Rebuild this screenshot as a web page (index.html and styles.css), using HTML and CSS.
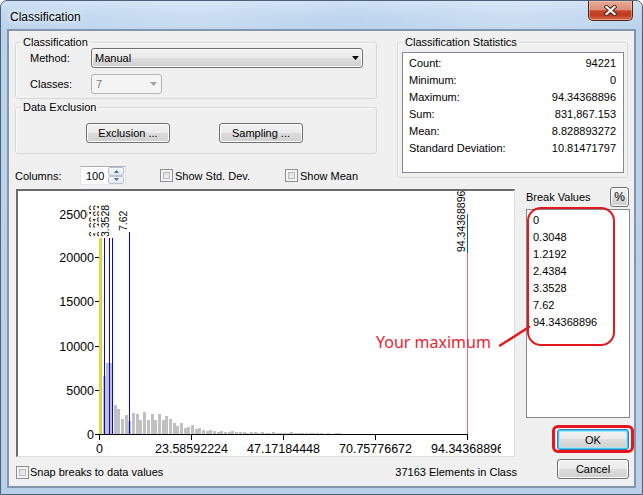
FILE: index.html
```html
<!DOCTYPE html>
<html>
<head>
<meta charset="utf-8">
<title>Classification</title>
<link rel="stylesheet" href="styles.css">
</head>
<body>
<div class="window">
  <div class="titlebar">
    <span class="title">Classification</span>
    <div class="close">
      <svg width="13" height="11" viewBox="0 0 13 11"><path d="M2.5 2 L10.5 9 M10.5 2 L2.5 9" stroke="#4a2419" stroke-width="4.2" stroke-linecap="square"/><path d="M2.5 2 L10.5 9 M10.5 2 L2.5 9" stroke="#fff" stroke-width="2.2" stroke-linecap="square"/></svg>
    </div>
  </div>
  <div class="client">
    <div class="top">
      <div class="left-col">
        <fieldset class="group g-class">
          <legend>Classification</legend>
          <div class="form">
            <div class="form-row">
              <span class="lbl">Method:</span>
              <div class="combo combo-method"><span>Manual</span><svg class="arr" width="7" height="4" viewBox="0 0 7 4"><path d="M0 0H7L3.5 4Z" fill="#000"/></svg></div>
            </div>
            <div class="form-row">
              <span class="lbl">Classes:</span>
              <div class="combo combo-classes"><span>7</span><svg class="arr" width="7" height="4" viewBox="0 0 7 4"><path d="M0 0H7L3.5 4Z" fill="#a3a3a3"/></svg></div>
            </div>
          </div>
        </fieldset>
        <fieldset class="group g-excl">
          <legend>Data Exclusion</legend>
          <div class="btn-row">
            <div class="btn btn-wide">Exclusion ...</div>
            <div class="btn btn-wide">Sampling ...</div>
          </div>
        </fieldset>
        <div class="controls">
          <span class="col-lbl">Columns:</span>
          <div class="spin">
            <span class="spin-val">100</span>
            <div class="spin-btns">
              <div class="spin-btn"><svg width="5" height="3" viewBox="0 0 5 3"><path d="M0 3H5L2.5 0Z" fill="#4a6a96"/></svg></div>
              <div class="spin-btn"><svg width="5" height="3" viewBox="0 0 5 3"><path d="M0 0H5L2.5 3Z" fill="#4a6a96"/></svg></div>
            </div>
          </div>
          <span class="cb cb-std"></span><span class="cb-lbl lbl-std">Show Std. Dev.</span>
          <span class="cb"></span><span class="cb-lbl">Show Mean</span>
        </div>
      </div>
      <fieldset class="group g-stats">
        <legend>Classification Statistics</legend>
        <div class="stats">
          <div class="stat"><span>Count:</span><span>94221</span></div>
          <div class="stat"><span>Minimum:</span><span>0</span></div>
          <div class="stat"><span>Maximum:</span><span>94.34368896</span></div>
          <div class="stat"><span>Sum:</span><span>831,867.153</span></div>
          <div class="stat"><span>Mean:</span><span>8.828893272</span></div>
          <div class="stat"><span>Standard Deviation:</span><span>10.81471797</span></div>
        </div>
      </fieldset>
    </div>

    <div class="main">
      <div class="chart-col">
        <div class="chart">
          <svg class="plot" width="496" height="265" viewBox="18 191 496 265" shape-rendering="crispEdges">
            <defs><clipPath id="clipx"><rect x="18" y="191" width="483" height="265"/></clipPath></defs>
            <g fill="#c0c0c0">
              <rect x="99" y="238" width="3" height="196"/>
              <rect x="103" y="376" width="3" height="58"/>
              <rect x="106" y="363" width="4" height="71"/>
              <rect x="110" y="363" width="3" height="71"/>
              <rect x="114" y="405" width="3" height="29"/>
              <rect x="117" y="409" width="3" height="25"/>
              <rect x="121" y="419" width="3" height="15"/>
              <rect x="125" y="415" width="3" height="19"/>
              <rect x="128" y="421" width="3" height="13"/>
              <rect x="132" y="413" width="3" height="21"/>
              <rect x="136" y="414" width="3" height="20"/>
              <rect x="139" y="420" width="3" height="14"/>
              <rect x="143" y="412" width="3" height="22"/>
              <rect x="147" y="420" width="3" height="14"/>
              <rect x="151" y="414" width="3" height="20"/>
              <rect x="154" y="420" width="3" height="14"/>
              <rect x="158" y="414" width="3" height="20"/>
              <rect x="162" y="420" width="3" height="14"/>
              <rect x="165" y="416" width="3" height="18"/>
              <rect x="169" y="419" width="3" height="15"/>
              <rect x="173" y="423" width="3" height="11"/>
              <rect x="176" y="426" width="3" height="8"/>
              <rect x="180" y="423" width="3" height="11"/>
              <rect x="184" y="428" width="3" height="6"/>
              <rect x="187" y="427" width="3" height="7"/>
              <rect x="191" y="425" width="3" height="9"/>
              <rect x="195" y="429" width="3" height="5"/>
              <rect x="198" y="428" width="3" height="6"/>
              <rect x="202" y="430" width="3" height="4"/>
              <rect x="206" y="431" width="3" height="3"/>
              <rect x="209" y="430" width="3" height="4"/>
              <rect x="213" y="431" width="3" height="3"/>
              <rect x="217" y="432" width="3" height="2"/>
              <rect x="220" y="431" width="3" height="3"/>
              <rect x="224" y="432" width="3" height="2"/>
              <rect x="228" y="432" width="3" height="2"/>
              <rect x="231" y="431" width="3" height="3"/>
              <rect x="235" y="432" width="3" height="2"/>
              <rect x="239" y="432" width="3" height="2"/>
              <rect x="243" y="432" width="3" height="2"/>
              <rect x="246" y="433" width="3" height="1"/>
              <rect x="250" y="432" width="3" height="2"/>
              <rect x="254" y="432" width="3" height="2"/>
              <rect x="257" y="433" width="3" height="1"/>
              <rect x="261" y="432" width="3" height="2"/>
              <rect x="265" y="433" width="3" height="1"/>
              <rect x="268" y="433" width="3" height="1"/>
              <rect x="272" y="432" width="3" height="2"/>
              <rect x="276" y="433" width="3" height="1"/>
              <rect x="279" y="433" width="3" height="1"/>
              <rect x="283" y="433" width="3" height="1"/>
              <rect x="287" y="433" width="3" height="1"/>
              <rect x="290" y="432" width="3" height="2"/>
              <rect x="294" y="433" width="3" height="1"/>
              <rect x="298" y="433" width="3" height="1"/>
              <rect x="301" y="433" width="3" height="1"/>
              <rect x="305" y="433" width="3" height="1"/>
              <rect x="309" y="433" width="3" height="1"/>
              <rect x="312" y="433" width="3" height="1"/>
              <rect x="316" y="433" width="3" height="1"/>
              <rect x="320" y="433" width="3" height="1"/>
              <rect x="327" y="433" width="3" height="1"/>
              <rect x="335" y="433" width="3" height="1"/>
              <rect x="338" y="433" width="3" height="1"/>
            </g>
            <g fill="#000">
              <rect x="95" y="213" width="4" height="1"/>
              <rect x="95" y="257" width="4" height="1"/>
              <rect x="95" y="301" width="4" height="1"/>
              <rect x="95" y="346" width="4" height="1"/>
              <rect x="95" y="390" width="4" height="1"/>
              <rect x="95" y="434" width="4" height="1"/>
              <rect x="99" y="434" width="369" height="1"/>
              <rect x="99" y="434" width="1" height="6"/>
              <rect x="191" y="434" width="1" height="6"/>
              <rect x="283" y="434" width="1" height="6"/>
              <rect x="375" y="434" width="1" height="6"/>
              <rect x="467" y="434" width="1" height="6"/>
            </g>
            <g class="axis-txt" text-anchor="end">
              <text x="94" y="218.5">25000</text>
              <text x="94" y="262">20000</text>
              <text x="94" y="306">15000</text>
              <text x="94" y="351">10000</text>
              <text x="94" y="395">5000</text>
              <text x="94" y="439">0</text>
            </g>
            <g class="axis-txt" text-anchor="middle">
              <text x="99.5" y="453">0</text>
              <text x="191.5" y="453">23.58592224</text>
              <text x="283.5" y="453">47.17184448</text>
              <text x="375.5" y="453">70.75776672</text>
              <text x="467.5" y="453" clip-path="url(#clipx)">94.34368896</text>
            </g>
            <rect x="99" y="238" width="2" height="196" fill="#ece000"/>
            <g fill="#0000ff">
              <rect x="104" y="238" width="1" height="196"/>
              <rect x="109" y="238" width="1" height="196"/>
              <rect x="112" y="238" width="1" height="196"/>
              <rect x="129" y="232" width="1" height="202"/>
            </g>
            <rect x="467" y="214" width="1" height="39" fill="#006a6a"/>
            <rect x="467" y="253" width="1" height="181" fill="#f06868"/>
            <g class="brk-txt" shape-rendering="auto">
              <g transform="translate(95.5 237) rotate(-90)"><rect x="0" y="-9.5" width="6" height="11.7" fill="#fff"/><text>0</text></g>
              <g transform="translate(97 237) rotate(-90)"><rect x="0" y="-9.5" width="32" height="11.7" fill="#fff"/><text>0.3048</text></g>
              <g transform="translate(100.5 237) rotate(-90)"><rect x="0" y="-9.5" width="32" height="11.7" fill="#fff"/><text>1.2192</text></g>
              <g transform="translate(105 237) rotate(-90)"><rect x="0" y="-9.5" width="32" height="11.7" fill="#fff"/><text>2.4384</text></g>
              <g transform="translate(108.5 237) rotate(-90)"><rect x="0" y="-9.5" width="32" height="11.7" fill="#fff"/><text>3.3528</text></g>
              <g transform="translate(127 231) rotate(-90)"><rect x="0" y="-9.5" width="20.5" height="11.7" fill="#fff"/><text>7.62</text></g>
              <g transform="translate(464.5 252) rotate(-90)"><rect x="0" y="-9.5" width="61.5" height="11.7" fill="#fff"/><text>94.34368896</text></g>
            </g>
          </svg>
        </div>
        <div class="status">
          <div class="status-left"><span class="cb"></span><span class="cb-lbl snap-lbl">Snap breaks to data values</span></div>
          <span class="count">37163 Elements in Class</span>
        </div>
      </div>
      <div class="side">
        <div class="side-head"><span>Break Values</span><div class="btn btn-pct">%</div></div>
        <div class="breaks">
          <div class="brk">0</div>
          <div class="brk">0.3048</div>
          <div class="brk">1.2192</div>
          <div class="brk">2.4384</div>
          <div class="brk">3.3528</div>
          <div class="brk">7.62</div>
          <div class="brk">94.34368896</div>
        </div>
        <div class="ok-wrap"><div class="btn btn-ok">OK</div></div>
        <div class="btn btn-cancel">Cancel</div>
      </div>
    </div>

    <div class="annot-rect"></div>
    <svg class="annot-arrow" width="40" height="28" viewBox="495 322 40 28"><line x1="500" y1="345.5" x2="529" y2="327" stroke="#e5161e" stroke-width="2.5" stroke-linecap="round"/></svg>
    <span class="annot-text">Your maximum</span>
  </div>
</div>
</body>
</html>
```

FILE: styles.css
```css
* { box-sizing: border-box; }
html, body { margin: 0; padding: 0; }
body {
  width: 643px;
  height: 495px;
  overflow: hidden;
  background: #ffffff;
  font-family: "Liberation Sans", Arial, sans-serif;
  font-size: 11px;
  color: #000;
}

.window {
  width: 643px;
  height: 495px;
  border: 1px solid #4d6077;
  border-radius: 7px 7px 0 0;
  background: linear-gradient(180deg, #cfe2f5 0px, #c0d7ef 14px, #bad2ec 30px, #b8d0ea 100%);
  padding: 0 6px 6px 6px;
  display: flex;
  flex-direction: column;
  overflow: hidden;
}

.titlebar {
  height: 28px;
  margin: 0 -6px;
  padding: 0 9px 0 9px;
  display: flex;
  align-items: flex-start;
  background: linear-gradient(100deg, rgba(255,255,255,0) 0%, rgba(255,255,255,0.18) 30%, rgba(255,255,255,0) 55%, rgba(255,255,255,0.2) 80%, rgba(255,255,255,0) 100%);
}
.title {
  font-size: 12px;
  line-height: 14px;
  margin-top: 9px;
  text-shadow: 0 0 5px #fff, 0 0 8px rgba(255,255,255,0.9);
}
.close {
  margin-left: auto;
  width: 45px;
  height: 20px;
  border: 1px solid #5a2519;
  border-top: 0;
  border-radius: 0 0 5px 5px;
  background: linear-gradient(180deg, #e9ab98 0%, #dc8f7a 45%, #c8472c 52%, #be3a1e 75%, #d46e4c 100%);
  box-shadow: inset 0 0 0 1px rgba(255,210,190,0.45);
  display: flex;
  align-items: center;
  justify-content: center;
}
.close svg { display: block; }

.client {
  flex: 1;
  position: relative;
  background: #f0f0f0;
  border: 2px solid #8496ab;
  padding: 5px 4px 0 6px;
}

/* ---------- top area ---------- */
.top {
  display: grid;
  grid-template-columns: 362px 231px;
  column-gap: 20px;
  align-items: start;
}
.group {
  margin: 0;
  padding: 0;
  min-width: 0;
  border: 1px solid #d5d9dd;
  border-radius: 3px;
  box-shadow: inset 1px 1px 0 #fbfbfb;
}
.group legend {
  padding: 0 2px;
  margin-left: 5px;
  line-height: 12px;
  font-size: 11px;
}
.form { padding: 0 13px 4px 14px; }
.form-row {
  display: flex;
  align-items: center;
  height: 20px;
}
.form-row + .form-row { margin-top: 6px; }
.lbl { width: 61px; }

.combo {
  height: 20px;
  display: flex;
  align-items: center;
  border-radius: 3px;
}
.combo-method {
  width: 272px;
  padding: 0 3px;
  border: 1px solid #707070;
  background: linear-gradient(180deg, #f2f2f2 0%, #ebebeb 49%, #dddddd 50%, #cfcfcf 100%);
  box-shadow: inset 0 0 0 1px #fbfbfb;
}
.combo-classes {
  width: 71px;
  padding: 0 4px 0 4px;
  border: 1px solid #b2b5b8;
  background: #f4f4f4;
  color: #7d7d7d;
}
.combo .arr { margin-left: auto; display: block; }

.g-excl { margin-top: 2px; }
.btn-row {
  display: flex;
  gap: 49px;
  padding: 10px 0 10px 70px;
}
.btn {
  height: 20px;
  display: flex;
  align-items: center;
  justify-content: center;
  border: 1px solid #707070;
  border-radius: 3px;
  background: linear-gradient(180deg, #f2f2f2 0%, #ebebeb 49%, #dddddd 50%, #cfcfcf 100%);
  box-shadow: inset 0 0 0 1px #fcfcfc;
  font-size: 11px;
}
.btn-wide { width: 84px; }

.controls {
  margin-top: 12px;
  height: 19px;
  display: flex;
  align-items: center;
}
.col-lbl { width: 65px; }
.spin {
  width: 46px;
  height: 19px;
  display: flex;
  align-items: center;
  background: #fff;
  border: 1px solid;
  border-color: #abadb3 #dbdfe6 #e3e9ef #e2e3ea;
}
.spin-val { padding-left: 5px; }
.spin-btns {
  margin-left: auto;
  margin-right: 1px;
  width: 16px;
  height: 17px;
  display: flex;
  flex-direction: column;
}
.spin-btn {
  flex: 1;
  display: flex;
  align-items: center;
  justify-content: center;
  border: 1px solid #b9c2cf;
  border-radius: 2px;
  background: linear-gradient(180deg, #f6f8fb 0%, #e3e9f1 100%);
}
.spin-btn svg { display: block; }

.cb {
  width: 13px;
  height: 13px;
  flex: none;
  border: 1px solid #8e8f8f;
  background: linear-gradient(135deg, #cfd1d4 0%, #ececec 60%, #f8f8f8 100%);
  box-shadow: inset 0 0 0 2px #f4f4f4, inset 0 0 0 3px #b8bbbf;
}
.cb-std { margin-left: 34px; }
.cb-lbl { margin-left: 2px; }
.lbl-std { width: 110px; }

.g-stats { height: 142px; }
.stats {
  margin: 4px 3px 4px 4px;
  height: 121px;
  border: 1px solid #828790;
  background: #fff;
  padding: 2px 7px 0 6px;
}
.stat {
  display: flex;
  justify-content: space-between;
  height: 17px;
  line-height: 17px;
}

/* ---------- main area ---------- */
.main {
  margin-top: 2px;
  display: grid;
  grid-template-columns: 500px 104px;
  column-gap: 11px;
}
.chart {
  margin: 2px 0 0 1px;
  width: 499px;
  height: 268px;
  background: #fff;
  border-style: solid;
  border-width: 2px 1px 1px 2px;
  border-color: #6a6a6a #dcdcdc #dcdcdc #6a6a6a;
  overflow: hidden;
}
.plot { display: block; }
.axis-txt text { font-family: "Liberation Sans", Arial, sans-serif; font-size: 12.5px; fill: #000; }
.brk-txt text { font-family: "Liberation Sans", Arial, sans-serif; font-size: 10.5px; fill: #000; }

.status {
  margin-top: 5px;
  height: 20px;
  display: flex;
  align-items: center;
  justify-content: space-between;
}
.status-left { display: flex; align-items: center; padding-left: 1px; }
.snap-lbl { margin-left: 1px; }
.count { margin-right: -2px; }

.side { display: flex; flex-direction: column; }
.side-head {
  height: 20px;
  display: flex;
  align-items: center;
  justify-content: space-between;
}
.btn-pct { width: 19px; height: 20px; margin-right: 1px; font-size: 12px; }
.breaks {
  margin-top: 2px;
  height: 209px;
  border: 1px solid #828790;
  background: #fff;
  padding: 2px 0 0 6px;
}
.brk { height: 17px; line-height: 17px; }
.ok-wrap {
  position: relative;
  margin: 11px 0 0 31px;
  width: 72px;
  height: 21px;
}
.btn-ok {
  height: 21px;
  border-color: #3c7fb1;
  box-shadow: inset 0 0 0 1px #3fc6f2, inset 0 0 0 2px #a9e4f7;
}
.ok-wrap::after {
  content: "";
  position: absolute;
  top: -4px;
  left: -5px;
  right: -5px;
  bottom: -3px;
  border: 3px solid #e5161e;
  border-radius: 6px;
}
.btn-cancel {
  margin: 9px 0 0 31px;
  width: 72px;
  height: 20px;
}

/* ---------- annotations ---------- */
.annot-rect {
  position: absolute;
  left: 518px;
  top: 176px;
  width: 88px;
  height: 139px;
  border: 2.5px solid #e5161e;
  border-radius: 14px;
}
.annot-arrow {
  position: absolute;
  left: 486px;
  top: 291px;
  display: block;
}
.annot-text {
  position: absolute;
  left: 367px;
  top: 303px;
  font-family: "Noto Sans", "Open Sans", sans-serif;
  font-size: 16px;
  line-height: 16px;
  color: #ec2431;
  white-space: nowrap;
}
```
